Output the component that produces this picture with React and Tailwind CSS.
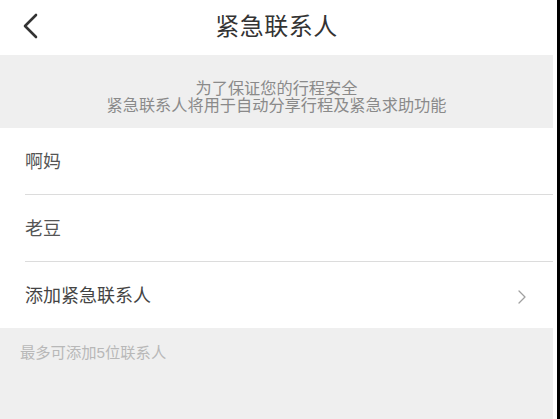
const rows = ['啊妈', '老豆']

const ChevronLeft = () => (
    <svg width="16" height="26" viewBox="0 0 16 26" fill="none" className="text-[#333]">
        <path d="M13 2L2 13l11 11" stroke="currentColor" strokeWidth="2.6" strokeLinecap="round" strokeLinejoin="round" />
    </svg>
)

const ChevronRight = () => (
    <svg width="8" height="14" viewBox="0 0 8 14" fill="none" className="text-[#a0a0a0]">
        <path d="M1 1l6 6-6 6" stroke="currentColor" strokeWidth="1.3" strokeLinecap="round" strokeLinejoin="round" />
    </svg>
)

export default function App() {
    return (
        <div
            className="flex h-[419px] w-[560px] overflow-hidden bg-white"
            style={{ fontFamily: '"Liberation Sans", "Noto Sans CJK SC", sans-serif' }}>
            <div className="flex w-[553px] flex-col bg-[#efefef]">
                {/* Header */}
                <header className="relative flex h-[55px] items-center justify-center bg-white">
                    <button className="absolute left-[23px] top-[13px]">
                        <ChevronLeft />
                    </button>
                    <h1 className="pb-[2px] text-[24px] font-normal leading-none text-[#333] tracking-[0.5px]">
                        紧急联系人
                    </h1>
                </header>

                {/* Notice */}
                <div className="flex h-[73px] flex-col items-center justify-center pt-[10px] text-[16.2px] leading-[17px] text-[#8a8a8a]">
                    <p>为了保证您的行程安全</p>
                    <p>紧急联系人将用于自动分享行程及紧急求助功能</p>
                </div>

                {/* List */}
                <ul className="bg-white">
                    {rows.map(name => (
                        <li key={name} className="pl-[25px]">
                            <div className="flex h-[67px] items-center border-b border-[#dcdcdc] pt-[3px] text-[18px] text-[#555]">
                                {name}
                            </div>
                        </li>
                    ))}
                    <li className="flex h-[66px] items-center justify-between pl-[25px] pr-[27px] pt-[3px] text-[18px] text-[#444]">
                        <span>添加紧急联系人</span>
                        <ChevronRight />
                    </li>
                </ul>

                <p className="px-[20px] pt-[14px] text-[15.3px] text-[#b8b8b8]">最多可添加5位联系人</p>
            </div>
            <div className="w-[4px] bg-white" />
            <div className="w-[3px] bg-black" />
        </div>
    )
}
